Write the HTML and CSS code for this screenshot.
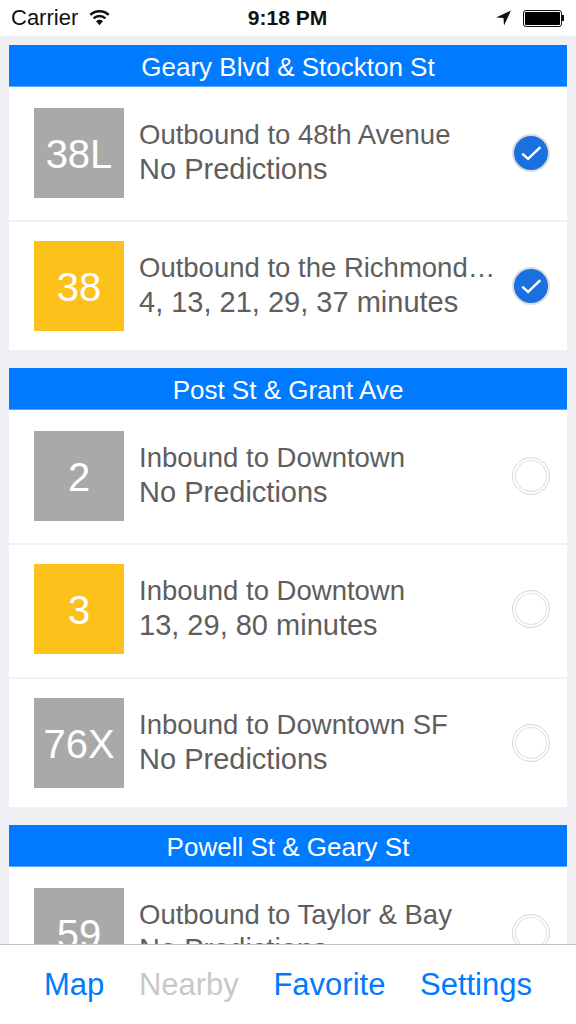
FILE: index.html
```html
<!DOCTYPE html>
<html lang="en">
<head>
<meta charset="utf-8">
<title>Nearby</title>
<link rel="stylesheet" href="styles.css">
</head>
<body>
<div class="app">
  <header class="status">
    <div class="status-left">
      <span>Carrier</span>
      <svg class="wifi" viewBox="0 0 22 16"><path d="M11 15.5 7.4 11.4a5.2 5.2 0 0 1 7.2 0Z" fill="#111"/><path d="M4.8 8.4a9 9 0 0 1 12.4 0M1.4 4.8a13.8 13.8 0 0 1 19.2 0" fill="none" stroke="#111" stroke-width="2.6"/></svg>
    </div>
    <div class="status-time">9:18 PM</div>
    <div class="status-right">
      <svg class="arrow" viewBox="0 0 16 16"><path d="M15.5 .5 .5 7.5 8 8l.5 7.5Z" fill="#111"/></svg>
      <div class="battery"><div class="battery-fill"></div></div><div class="battery-cap"></div>
    </div>
  </header>
  <main class="list">
    <section class="stop">
      <h2 class="stop-title">Geary Blvd &amp; Stockton St</h2>
      <div class="row first">
        <div class="badge grey">38L</div>
        <div class="info"><div class="line">Outbound to 48th Avenue</div><div class="line sub">No Predictions</div></div>
        <div class="check on"><svg viewBox="0 0 24 24"><path d="M4.5 12.5 9.5 17 20 7" fill="none" stroke="#fff" stroke-width="2.2"/></svg></div>
      </div>
      <div class="row last">
        <div class="badge amber">38</div>
        <div class="info"><div class="line">Outbound to the Richmond…</div><div class="line sub">4, 13, 21, 29, 37 minutes</div></div>
        <div class="check on"><svg viewBox="0 0 24 24"><path d="M4.5 12.5 9.5 17 20 7" fill="none" stroke="#fff" stroke-width="2.2"/></svg></div>
      </div>
    </section>
    <section class="stop">
      <h2 class="stop-title">Post St &amp; Grant Ave</h2>
      <div class="row first">
        <div class="badge grey">2</div>
        <div class="info"><div class="line">Inbound to Downtown</div><div class="line sub">No Predictions</div></div>
        <div class="check"></div>
      </div>
      <div class="row">
        <div class="badge amber">3</div>
        <div class="info"><div class="line">Inbound to Downtown</div><div class="line sub">13, 29, 80 minutes</div></div>
        <div class="check"></div>
      </div>
      <div class="row last">
        <div class="badge grey">76X</div>
        <div class="info"><div class="line">Inbound to Downtown SF</div><div class="line sub">No Predictions</div></div>
        <div class="check"></div>
      </div>
    </section>
    <section class="stop">
      <h2 class="stop-title">Powell St &amp; Geary St</h2>
      <div class="row first">
        <div class="badge grey">59</div>
        <div class="info"><div class="line">Outbound to Taylor &amp; Bay</div><div class="line sub">No Predictions</div></div>
        <div class="check"></div>
      </div>
    </section>
  </main>
  <nav class="tabs">
    <span class="tab">Map</span>
    <span class="tab off">Nearby</span>
    <span class="tab">Favorite</span>
    <span class="tab">Settings</span>
  </nav>
</div>
</body>
</html>
```
FILE: styles.css
```css
* { box-sizing: border-box; }
html, body { margin: 0; padding: 0; }
body { font-family: "Liberation Sans", Arial, sans-serif; background: #efeff4; }
.app { width: 576px; height: 1024px; display: flex; flex-direction: column; overflow: hidden; }

.status { height: 36px; flex: none; background: #fff; display: flex; align-items: center; justify-content: space-between; padding: 0 12px 0 11px; color: #111; font-size: 22px; }
.status-left { display: flex; align-items: center; gap: 11px; width: 140px; }
.wifi { width: 21px; height: 16px; }
.status-time { font-weight: 700; font-size: 21px; }
.status-right { display: flex; align-items: center; justify-content: flex-end; width: 140px; }
.arrow { width: 17px; height: 16px; margin-right: 11px; }
.battery { width: 39px; height: 17px; border: 1px solid #111; border-radius: 3px; padding: 1px; }
.battery-fill { height: 100%; background: #000; border-radius: 1px; }
.battery-cap { width: 2px; height: 6px; background: #111; }

.list { flex: 1; min-height: 0; overflow: hidden; padding: 9px 9px 0; }
.stop { margin-bottom: 18px; background: #fff; }
.stop-title { margin: 0; height: 42px; padding-top: 3px; background: #007aff; color: #fff; font-weight: 400; font-size: 26px; border-bottom: 1px solid #5aa9ff; display: flex; align-items: center; justify-content: center; }
.row { height: 134px; display: flex; align-items: flex-start; padding: 19px 17px 0 25px; border-bottom: 2px solid #f2f2f6; }
.row.first { height: 135px; padding-top: 21px; }
.row.last { height: 128px; border-bottom: 0; }
.badge { width: 90px; height: 90px; flex: none; padding-top: 2px; color: #fff; font-size: 40px; display: flex; align-items: center; justify-content: center; }
.grey { background: #a9a9a9; }
.amber { background: #fdc11c; }
.info { flex: 1; min-width: 0; padding: 9px 0 0 15px; color: #5e5e5e; font-size: 27.5px; line-height: 35px; }
.line { white-space: nowrap; }
.sub { font-size: 29px; }
.check { width: 38px; height: 38px; flex: none; margin-top: 26px; border-radius: 50%; border: 1px solid #d8d8d8; padding: 2px; background: #fff; }
.check:not(.on) { box-shadow: inset 0 0 0 2px #fff, inset 0 0 0 3px #e0e0e0; }
.check.on { background: #1b70e0; border: 2px solid #dcdcdc; padding: 3px; }
.check svg { display: block; width: 100%; height: 100%; }

.tabs { height: 80px; flex: none; padding: 1px 44px 0; background: #fff; border-top: 1px solid #c4c4c6; display: flex; align-items: center; justify-content: space-between; font-size: 31px; color: #007aff; }
.tab.off { color: #c8c8c8; }
```
